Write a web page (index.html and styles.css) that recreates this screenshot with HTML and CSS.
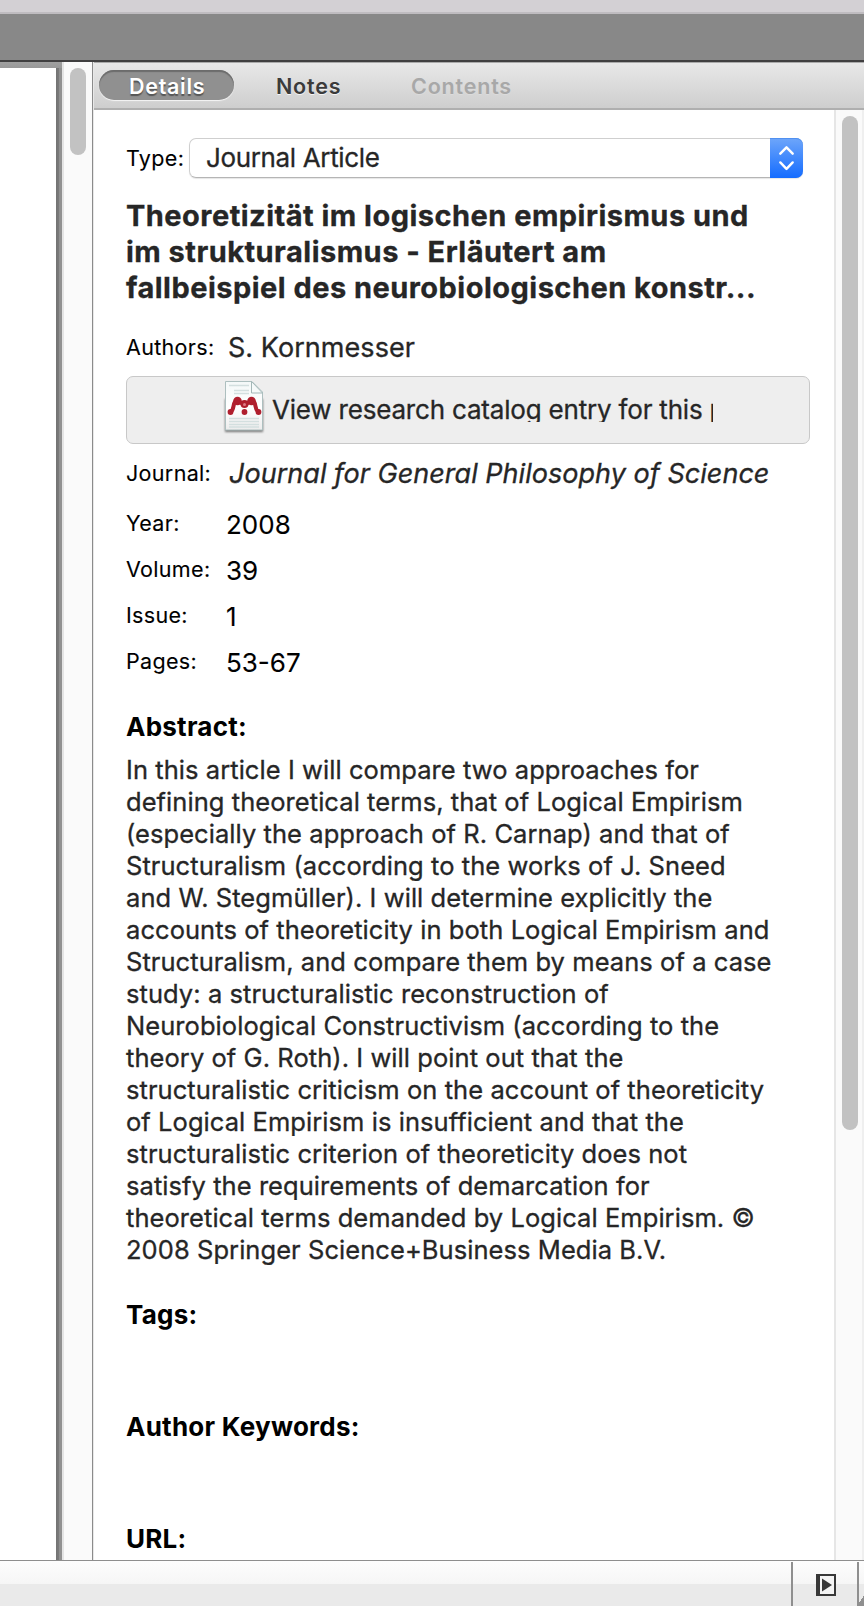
FILE: index.html
```html
<!DOCTYPE html>
<html lang="en">
<head>
<meta charset="utf-8">
<title>Document details</title>
<link rel="stylesheet" href="styles.css">
</head>
<body>
<div class="window">
  <div class="titlebar"></div>
  <div class="toolbar"></div>
  <div class="workspace">
    <div class="viewer"><div class="page"></div></div>
    <div class="scroll scroll-left"><div class="thumb thumb-left"></div></div>
    <aside class="panel">
      <nav class="tabs">
        <span class="tab active">Details</span>
        <span class="tab notes">Notes</span>
        <span class="tab disabled">Contents</span>
      </nav>
      <div class="panel-body">
        <main class="details">
          <div class="type-row">
            <span class="label">Type:</span>
            <div class="select"><span>Journal Article</span>
              <span class="stepper"><svg width="33" height="40" viewBox="0 0 33 40" fill="none" stroke="#fff" stroke-width="2.4" stroke-linecap="round" stroke-linejoin="round"><path d="M10.3 15.7 16.5 9.3l6.2 6.4M10.3 24.4l6.2 6.5 6.2-6.5"/></svg></span>
            </div>
          </div>
          <h1 class="title">Theoretizität im logischen empirismus und<br>im strukturalismus - Erläutert am<br>fallbeispiel des neurobiologischen konstr...</h1>
          <div class="field authors"><span class="label">Authors:</span><span class="value">S. Kornmesser</span></div>
          <div class="catalog">
            <svg class="doc" width="44" height="56" viewBox="0 0 44 56">
              <defs>
                <linearGradient id="paper" x1="0" y1="0" x2="0" y2="1"><stop offset="0" stop-color="#f4f8f8"/><stop offset=".55" stop-color="#fff"/><stop offset="1" stop-color="#ececec"/></linearGradient>
                <filter id="soft" x="-20%" y="-20%" width="140%" height="150%"><feGaussianBlur stdDeviation="1.3"/></filter>
              </defs>
              <path d="M3 20h38v33H3z" fill="#000" opacity=".5" filter="url(#soft)"/>
              <path d="M3.500 2.500H30L40.500 13v38h-37z" fill="url(#paper)" stroke="#adbfbf"/>
              <path d="M29.500 2.500V14h11z" fill="#f6fafa" stroke="#a4b8b8"/>
              <path d="M7 6.500h20M12 11.500h15M12 14.500h15M7 39.500h30M7 42.500h30M7 45.500h30M7 48h30" stroke="#d3dfdf" stroke-width="1.300"/>
              <g fill="#b01f2e"><circle cx="15.500" cy="22" r="4.300"/><circle cx="29.500" cy="22" r="4.300"/><circle cx="22.500" cy="25" r="4"/><circle cx="8.500" cy="33" r="2.900"/><circle cx="22.500" cy="33" r="2.900"/><circle cx="36.500" cy="33" r="2.900"/></g>
              <path d="M9 32.500c3-2 2-7 4-10M36 32.500c-3-2-2-7-4-10M15 22l7.500 3.500L30 22" fill="none" stroke="#b01f2e" stroke-width="4"/>
              <circle cx="22.500" cy="25.500" r="1.500" fill="#dc7b84"/>
            </svg>
            <span class="catalog-text">View research catalog entry for this paper</span>
          </div>
          <div class="field journal"><span class="label">Journal:</span><span class="value italic">Journal for General Philosophy of Science</span></div>
          <div class="facts">
            <div class="field"><span class="label">Year:</span><span class="value dark">2008</span></div>
            <div class="field"><span class="label">Volume:</span><span class="value dark">39</span></div>
            <div class="field"><span class="label">Issue:</span><span class="value dark">1</span></div>
            <div class="field"><span class="label">Pages:</span><span class="value dark">53-67</span></div>
          </div>
          <h2 class="heading">Abstract:</h2>
          <p class="abstract">In this article I will compare two approaches for<br>defining theoretical terms, that of Logical Empirism<br>(especially the approach of R. Carnap) and that of<br>Structuralism (according to the works of J. Sneed<br>and W. Stegmüller). I will determine explicitly the<br>accounts of theoreticity in both Logical Empirism and<br>Structuralism, and compare them by means of a case<br>study: a structuralistic reconstruction of<br>Neurobiological Constructivism (according to the<br>theory of G. Roth). I will point out that the<br>structuralistic criticism on the account of theoreticity<br>of Logical Empirism is insufficient and that the<br>structuralistic criterion of theoreticity does not<br>satisfy the requirements of demarcation for<br>theoretical terms demanded by Logical Empirism. ©<br>2008 Springer Science+Business Media B.V.</p>
          <h2 class="heading tags">Tags:</h2>
          <h2 class="heading more">Author Keywords:</h2>
          <h2 class="heading more">URL:</h2>
        </main>
        <div class="scroll scroll-right"><div class="thumb thumb-right"></div></div>
      </div>
    </aside>
  </div>
  <footer class="statusbar">
    <div class="status-toggle"><svg width="20" height="22" viewBox="0 0 20 22"><path d="M0 0h20v22H0z" fill="#383838"/><path d="M4 2h14v18H4z" fill="#f4f4f4"/><path d="M6 4.500 16 11 6 17.500z" fill="#383838"/></svg></div>
    <div class="grip"></div>
  </footer>
</div>
</body>
</html>
```
FILE: styles.css
```css
* { box-sizing: border-box; }
body { margin: 0; font-family: Inter, "Liberation Sans", sans-serif; color: #262626; -webkit-text-stroke: 0.3px; }
.window { width: 864px; height: 1606px; display: flex; flex-direction: column; overflow: hidden; background: #fff; }
.titlebar { height: 14px; flex: none; background: #d3d0d4; border-bottom: 2px solid #bfbcc0; }
.toolbar { height: 48px; flex: none; background: #888; border-bottom: 2px solid #403f40; }
.workspace { height: 1498px; flex: none; display: flex; }
.viewer { width: 62px; flex: none; padding-top: 6px; background: linear-gradient(#a0a0a0, #999 6px, transparent 6px), linear-gradient(90deg, #737373 56px, #7b7b7b 59px, #919191 59px); }
.page { width: 56px; height: 100%; background: #fff; }
.scroll { flex: none; background: #fafafa; }
.scroll-left { width: 32px; border-left: 2px solid #e4e4e4; padding: 6px 0 0 6px; box-shadow: inset -1px 0 #e8e8e8, inset -2px 0 #8b8b8b; }
.thumb { width: 16px; border-radius: 8px; background: #c2c2c2; }
.thumb-left { height: 87px; }
.panel { flex: 1; display: flex; flex-direction: column; min-width: 0; }
.tabs { height: 48px; flex: none; display: flex; padding: 8px 0 0 5px; background: linear-gradient(#e8e8e8, #cecece); border-top: 1px solid #aaa; border-bottom: 2px solid #afafaf; font-size: 21.5px; font-weight: 600; letter-spacing: 0.8px; line-height: 31px; white-space: nowrap; -webkit-text-stroke: 0; }
.tab { color: #3b3b3b; text-shadow: 0 1px #f5f5f5; }
.tab.active { width: 135px; height: 30px; margin-top: -1px; padding-left: 30px; border-radius: 15px; background: #909090; color: #fff; letter-spacing: 0.7px; line-height: 33px; text-shadow: 0 2px 1px #555; box-shadow: inset 0 2px 1px #6c6c6c, 0 1px 1px #f5f5f5; }
.tab.notes { padding-left: 42px; width: 177px; }
.tab.disabled { color: #a8a8a8; text-shadow: 0 1px #dcdcdc; }
.panel-body { flex: 1; display: flex; min-height: 0; }
.details { width: 740px; flex: none; padding: 28px 0 0 32px; }
.label { color: #000; font-size: 21.5px; letter-spacing: 0.33px; -webkit-text-stroke: 0.1px; }
.type-row { display: flex; align-items: center; height: 40px; }
.type-row .label { width: 63px; flex: none; padding-bottom: 1px; }
.select { width: 614px; height: 40px; display: flex; align-items: center; justify-content: space-between; border: 1px solid #cfcfcf; border-bottom-color: #b5b5b5; border-radius: 7px; padding-left: 16px; font-size: 26px; letter-spacing: -0.35px; line-height: 37px; box-shadow: 0 1px 1px #e6e6e6; }
.select > span:first-child { padding-bottom: 2px; }
.stepper { width: 33px; height: 40px; flex: none; margin-right: -1px; border-radius: 0 7px 7px 0; background: linear-gradient(#6ea6fa, #146cff); box-shadow: inset 0 1px #5090f0; }
.stepper svg { display: block; }
.title { margin: 20px 0 0; font-size: 29px; line-height: 36px; font-weight: 700; letter-spacing: 0.47px; white-space: nowrap; }
.field { display: flex; align-items: center; height: 36px; white-space: nowrap; }
.field .label { width: 101px; flex: none; }
.value { font-size: 26px; }
.dark { color: #000; margin-left: -1px; -webkit-text-stroke: 0.1px; }
.authors { margin-top: 23px; }
.authors .value { margin-left: 1px; font-size: 27px; letter-spacing: 0.05px; }
.catalog { width: 684px; height: 68px; margin-top: 11px; padding-left: 95px; display: flex; border: 1px solid #c8c8c8; border-radius: 7px; background: #eee; }
.doc { margin-top: 2px; flex: none; }
.catalog-text { width: 441px; height: 34px; margin: 11px 0 0 6px; overflow: hidden; white-space: nowrap; font-size: 26px; line-height: 44px; letter-spacing: -0.19px; }
.journal { margin-top: 11px; }
.italic { margin-left: 2px; font-size: 27px; font-style: italic; letter-spacing: 0.03px; }
.facts { margin-top: 10px; }
.facts .field { height: 46px; }
.facts .label { padding-bottom: 2px; }
.heading { margin: 26px 0 0; color: #000; font-size: 26px; line-height: 32px; font-weight: 700; letter-spacing: 0.25px; white-space: nowrap; -webkit-text-stroke: 0; }
.abstract { margin: 11px 0 0; font-size: 25.5px; line-height: 32px; letter-spacing: 0.06px; white-space: nowrap; }
.heading.tags { margin-top: 33px; }
.heading.more { margin-top: 80px; }
.scroll-right { width: 30px; border-left: 2px solid #e6e6e6; padding: 6px 0 0 6px; box-shadow: inset -2px 0 #efefef; }
.thumb-right { height: 1014px; }
.statusbar { height: 46px; flex: none; display: flex; justify-content: flex-end; border-top: 1px solid #8e8e8e; background: linear-gradient(#fdfdfd, #f6f6f6 23px, #eaeaea 23px); padding-top: 1px; }
.status-toggle { width: 68px; display: flex; padding: 12px 0 0 23px; border-left: 2px solid #8f8f8f; border-right: 2px solid #8f8f8f; }
.grip { width: 5px; background: linear-gradient(125deg, transparent 80%, #8f8f8f 80%); }
```
